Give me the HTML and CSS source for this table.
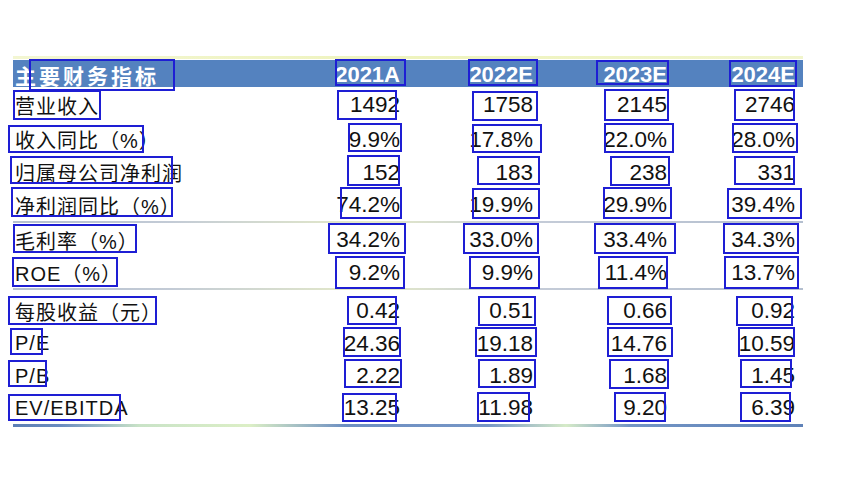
FILE: index.html
```html
<!DOCTYPE html>
<html lang="zh-CN">
<head>
<meta charset="utf-8">
<title>主要财务指标</title>
<link rel="stylesheet" href="styles.css">
</head>
<body>
<div class="page">
  <div class="sheet">
    <div class="topline"></div>
    <div class="row head">
      <div class="label">主要财务指标</div>
      <div class="v">2021A</div><div class="v">2022E</div><div class="v">2023E</div><div class="v">2024E</div>
    </div>
    <div class="row r-first">
      <div class="label">营业收入</div>
      <div class="v">1492</div><div class="v">1758</div><div class="v">2145</div><div class="v">2746</div>
    </div>
    <div class="row r-33">
      <div class="label">收入同比（%）</div>
      <div class="v">9.9%</div><div class="v">17.8%</div><div class="v">22.0%</div><div class="v">28.0%</div>
    </div>
    <div class="row r-33">
      <div class="label">归属母公司净利润</div>
      <div class="v">152</div><div class="v">183</div><div class="v">238</div><div class="v">331</div>
    </div>
    <div class="row r-32">
      <div class="label">净利润同比（%）</div>
      <div class="v">74.2%</div><div class="v">19.9%</div><div class="v">29.9%</div><div class="v">39.4%</div>
    </div>
    <div class="sep"></div>
    <div class="row r-34">
      <div class="label">毛利率（%）</div>
      <div class="v">34.2%</div><div class="v">33.0%</div><div class="v">33.4%</div><div class="v">34.3%</div>
    </div>
    <div class="row r-31">
      <div class="label">ROE（%）</div>
      <div class="v">9.2%</div><div class="v">9.9%</div><div class="v">11.4%</div><div class="v">13.7%</div>
    </div>
    <div class="sep"></div>
    <div class="row r-group">
      <div class="label">每股收益（元）</div>
      <div class="v">0.42</div><div class="v">0.51</div><div class="v">0.66</div><div class="v">0.92</div>
    </div>
    <div class="row r-33">
      <div class="label">P/E</div>
      <div class="v">24.36</div><div class="v">19.18</div><div class="v">14.76</div><div class="v">10.59</div>
    </div>
    <div class="row r-32">
      <div class="label">P/B</div>
      <div class="v">2.22</div><div class="v">1.89</div><div class="v">1.68</div><div class="v">1.45</div>
    </div>
    <div class="row r-32">
      <div class="label">EV/EBITDA</div>
      <div class="v">13.25</div><div class="v">11.98</div><div class="v">9.20</div><div class="v">6.39</div>
    </div>
    <div class="bottomline"></div>
  </div>

  <div class="ocr">
    <div class="box" style="left:29px;top:59px;width:146px;height:32px"></div>
    <div class="box" style="left:335px;top:59px;width:71px;height:27px"></div>
    <div class="box" style="left:468px;top:59px;width:70px;height:27px"></div>
    <div class="box" style="left:596px;top:60px;width:73px;height:25px"></div>
    <div class="box" style="left:729px;top:60px;width:68px;height:27px"></div>

    <div class="box" style="left:13px;top:90px;width:88px;height:30px"></div>
    <div class="box" style="left:337px;top:90px;width:60px;height:30px"></div>
    <div class="box" style="left:472px;top:91px;width:66px;height:30px"></div>
    <div class="box" style="left:604px;top:89px;width:65px;height:32px"></div>
    <div class="box" style="left:734px;top:89px;width:61px;height:32px"></div>

    <div class="box" style="left:8px;top:125px;width:136px;height:28px"></div>
    <div class="box" style="left:348px;top:123px;width:54px;height:29px"></div>
    <div class="box" style="left:472px;top:124px;width:70px;height:29px"></div>
    <div class="box" style="left:604px;top:123px;width:70px;height:30px"></div>
    <div class="box" style="left:732px;top:123px;width:66px;height:30px"></div>

    <div class="box" style="left:10px;top:156px;width:163px;height:28px"></div>
    <div class="box" style="left:347px;top:155px;width:53px;height:31px"></div>
    <div class="box" style="left:477px;top:156px;width:63px;height:29px"></div>
    <div class="box" style="left:610px;top:156px;width:60px;height:30px"></div>
    <div class="box" style="left:734px;top:156px;width:61px;height:29px"></div>

    <div class="box" style="left:11px;top:187px;width:162px;height:30px"></div>
    <div class="box" style="left:340px;top:187px;width:62px;height:32px"></div>
    <div class="box" style="left:472px;top:188px;width:68px;height:31px"></div>
    <div class="box" style="left:603px;top:187px;width:69px;height:32px"></div>
    <div class="box" style="left:727px;top:188px;width:75px;height:31px"></div>

    <div class="box" style="left:13px;top:224px;width:124px;height:29px"></div>
    <div class="box" style="left:328px;top:223px;width:78px;height:31px"></div>
    <div class="box" style="left:463px;top:223px;width:76px;height:31px"></div>
    <div class="box" style="left:594px;top:223px;width:82px;height:31px"></div>
    <div class="box" style="left:723px;top:223px;width:76px;height:31px"></div>

    <div class="box" style="left:12px;top:257px;width:106px;height:30px"></div>
    <div class="box" style="left:335px;top:256px;width:70px;height:33px"></div>
    <div class="box" style="left:469px;top:256px;width:71px;height:33px"></div>
    <div class="box" style="left:598px;top:256px;width:70px;height:33px"></div>
    <div class="box" style="left:724px;top:256px;width:75px;height:33px"></div>

    <div class="box" style="left:8px;top:296px;width:149px;height:29px"></div>
    <div class="box" style="left:347px;top:296px;width:50px;height:29px"></div>
    <div class="box" style="left:478px;top:296px;width:58px;height:30px"></div>
    <div class="box" style="left:607px;top:296px;width:65px;height:29px"></div>
    <div class="box" style="left:736px;top:296px;width:57px;height:30px"></div>

    <div class="box" style="left:10px;top:328px;width:33px;height:27px"></div>
    <div class="box" style="left:343px;top:327px;width:58px;height:30px"></div>
    <div class="box" style="left:475px;top:327px;width:62px;height:30px"></div>
    <div class="box" style="left:607px;top:327px;width:66px;height:30px"></div>
    <div class="box" style="left:738px;top:327px;width:57px;height:30px"></div>

    <div class="box" style="left:8px;top:360px;width:39px;height:27px"></div>
    <div class="box" style="left:344px;top:359px;width:58px;height:29px"></div>
    <div class="box" style="left:478px;top:359px;width:58px;height:29px"></div>
    <div class="box" style="left:609px;top:359px;width:60px;height:30px"></div>
    <div class="box" style="left:740px;top:359px;width:52px;height:29px"></div>

    <div class="box" style="left:8px;top:394px;width:113px;height:27px"></div>
    <div class="box" style="left:342px;top:393px;width:55px;height:29px"></div>
    <div class="box" style="left:477px;top:392px;width:53px;height:30px"></div>
    <div class="box" style="left:614px;top:392px;width:52px;height:30px"></div>
    <div class="box" style="left:740px;top:392px;width:51px;height:30px"></div>
  </div>
</div>
</body>
</html>
```

FILE: styles.css
```css
* { box-sizing: border-box; }

html, body {
  margin: 0;
  padding: 0;
  background: #ffffff;
}

.page {
  position: relative;
  width: 852px;
  height: 480px;
  overflow: hidden;
  background: #ffffff;
  font-family: "Liberation Sans", "Noto Sans CJK SC", sans-serif;
  color: #111111;
}

.sheet {
  margin-left: 13px;
  padding-top: 56px;
  width: 790px;
}

.topline {
  height: 3px;
  margin-bottom: 1px;
  background: linear-gradient(90deg, #f3f6d2 0%, #eef3bd 50%, #f1f5cc 100%);
}

.row {
  display: grid;
  grid-template-columns: 317px 70px 133px 134px 128px 8px;
  align-items: center;
}

.label {
  padding-left: 2px;
  font-size: 20px;
  letter-spacing: 1px;
  white-space: nowrap;
}

.v {
  text-align: right;
  font-size: 22.5px;
  white-space: nowrap;
}

.head {
  height: 27px;
  background: #5482bf;
  color: #ffffff;
}

.head .label {
  font-family: "Noto Sans CJK SC", sans-serif;
  font-weight: 700;
  font-size: 21px;
  letter-spacing: 3px;
}

.head .v {
  font-weight: 700;
  font-size: 22px;
}

.r-first { height: 36px; }
.r-34 { height: 34px; }
.r-33 { height: 33px; }
.r-32 { height: 32px; }
.r-31 { height: 31px; }
.r-group { height: 37px; padding-top: 5px; }

.sep {
  height: 2px;
  background: linear-gradient(90deg, #b5c0cf 0%, #c3cbd6 20%, #e6ebc8 45%, #c5ccd8 65%, #b4bfcf 100%);
}

.bottomline {
  height: 3px;
  background: linear-gradient(90deg, #5c7fb5 0%, #6a8cc0 6%, #c9e3c7 16%, #dcefc6 30%, #6d8fc2 42%, #7696c6 60%, #d6ebc8 70%, #7395c5 78%, #5f82b8 100%);
}

.ocr {
  position: absolute;
  left: 0;
  top: 0;
  width: 852px;
  height: 480px;
  pointer-events: none;
}

.box {
  position: absolute;
  border: 2px solid #1e1ed4;
}
```
